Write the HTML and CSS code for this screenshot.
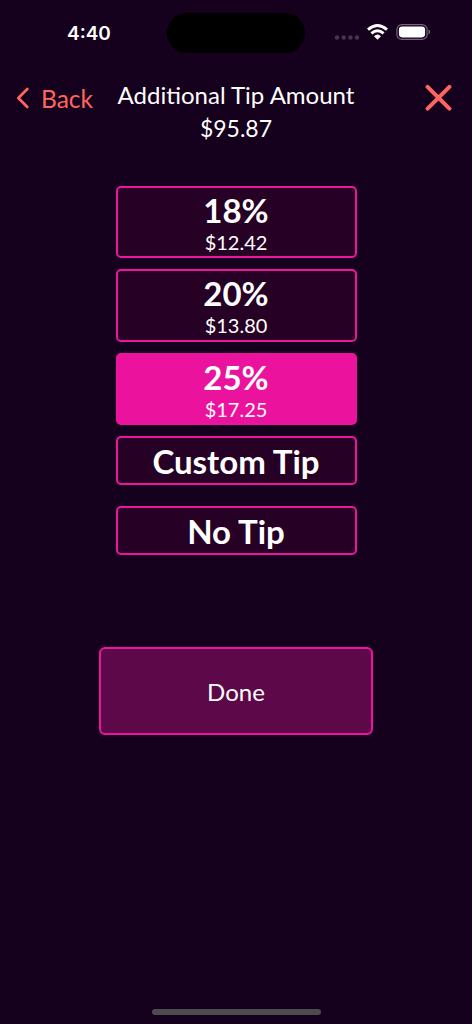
FILE: index.html
```html
<!DOCTYPE html>
<html lang="en">
<head>
<meta charset="utf-8">
<title>Additional Tip Amount</title>
<link rel="stylesheet" href="styles.css">
</head>
<body>
<main class="screen">
  <div class="status">
    <div class="time">4:40</div>
    <div class="island"></div>
    <div class="indicators">
      <svg class="signal" width="26" height="6" viewBox="0 0 26 6"><g fill="#46354c"><circle cx="3" cy="2.5" r="2.2"/><circle cx="9.7" cy="2.5" r="2.2"/><circle cx="16.4" cy="2.5" r="2.2"/><circle cx="23" cy="2.5" r="2.2"/></g></svg>
      <svg class="wifi" width="21" height="16" viewBox="0 0 21 16"><g fill="none" stroke="#fff" stroke-width="2.9"><path d="M1 5.7Q10.5-2.6 20 5.7"/><path d="M4.4 9.4Q10.5 4 16.6 9.4"/></g><path d="M10.5 15.8L7 12.2Q10.5 9 14 12.2Z" fill="#fff"/></svg>
      <svg class="battery" width="36" height="16" viewBox="0 0 36 16"><rect x=".9" y=".6" width="30.2" height="14.8" rx="5" fill="none" stroke="#746579" stroke-width="1.2"/><rect x="2.9" y="2.6" width="26.2" height="10.8" rx="3.3" fill="#fff"/><path d="M32.5 5.3Q36 8 32.5 10.7Z" fill="#746579"/></svg>
    </div>
  </div>
  <header class="header">
    <div class="back"><svg class="chevron" width="14" height="22" viewBox="0 0 14 22"><path d="M11.3 2L2.3 11L11.3 20" fill="none" stroke="#ff6560" stroke-width="2.7" stroke-linecap="round" stroke-linejoin="round"/></svg><span>Back</span></div>
    <div class="heading"><div>Additional Tip Amount</div><div class="amount">$95.87</div></div>
    <svg class="close" width="28" height="28" viewBox="0 0 28 28"><path d="M3.6 2.9L25.4 24.7M25.4 2.9L3.6 24.7" stroke="#ff6560" stroke-width="4" stroke-linecap="round"/></svg>
  </header>
  <div class="options">
    <div class="option"><b>18%</b><span>$12.42</span></div>
    <div class="option"><b>20%</b><span>$13.80</span></div>
    <div class="option selected"><b>25%</b><span>$17.25</span></div>
    <div class="option short"><b>Custom Tip</b></div>
    <div class="option short none"><b>No Tip</b></div>
  </div>
  <div class="done">Done</div>
  <div class="home"></div>
</main>
</body>
</html>
```
FILE: styles.css
```css
* { box-sizing: border-box; }
body { margin: 0; background: #15011d; color: #fff; font-family: Lato, sans-serif; }
.screen { width: 472px; height: 1024px; display: flex; flex-direction: column; align-items: center; overflow: hidden; }
.status { width: 100%; height: 65px; flex: none; display: grid; grid-template-columns: 167px 138px 167px; padding-top: 12.5px; }
.time { font: 600 19px/41px Inter, sans-serif; padding-left: 67px; }
.island { height: 40.5px; border-radius: 21px; background: #000; }
.indicators { display: flex; align-items: center; height: 39px; padding-left: 29px; }
.signal { margin-top: 11px; }
.wifi { margin-left: 7px; }
.battery { margin-left: 8px; }
.header { width: 100%; height: 120.6px; flex: none; display: grid; grid-template-columns: 117px 238px 117px; align-items: start; padding-top: 13px; }
.back { display: flex; align-items: center; gap: 11px; padding: 5px 0 0 16px; color: #ff6560; font-size: 24.5px; line-height: 32px; }
.chevron { margin-bottom: 2px; }
.heading { text-align: center; font-size: 24px; line-height: 33px; white-space: nowrap; }
.amount { font-size: 23px; padding-top: 1px; }
.close { margin: 6px 0 0 69px; }
.options { width: 241px; display: flex; flex-direction: column; gap: 11px; }
.option { height: 72.5px; border: 2px solid #ee149f; border-radius: 5px; background: #260125; display: flex; flex-direction: column; align-items: center; }
.option b { font-size: 33px; font-weight: 700; line-height: 36px; margin-top: 4.4px; }
.option span { font-size: 20px; line-height: 22px; margin-top: 2.6px; }
.selected { background: #eb129e; }
.short { height: 49px; }
.option.short b { margin-top: 5px; }
.none { margin-top: 10px; }
.done { width: 274px; height: 88px; margin-top: 92px; border: 2px solid #ee149f; border-radius: 6px; background: #5c0849; display: flex; align-items: center; justify-content: center; font-size: 24px; }
.home { width: 169px; height: 6px; border-radius: 3px; background: #4d4b4d; margin: auto 0 9px; }
```
